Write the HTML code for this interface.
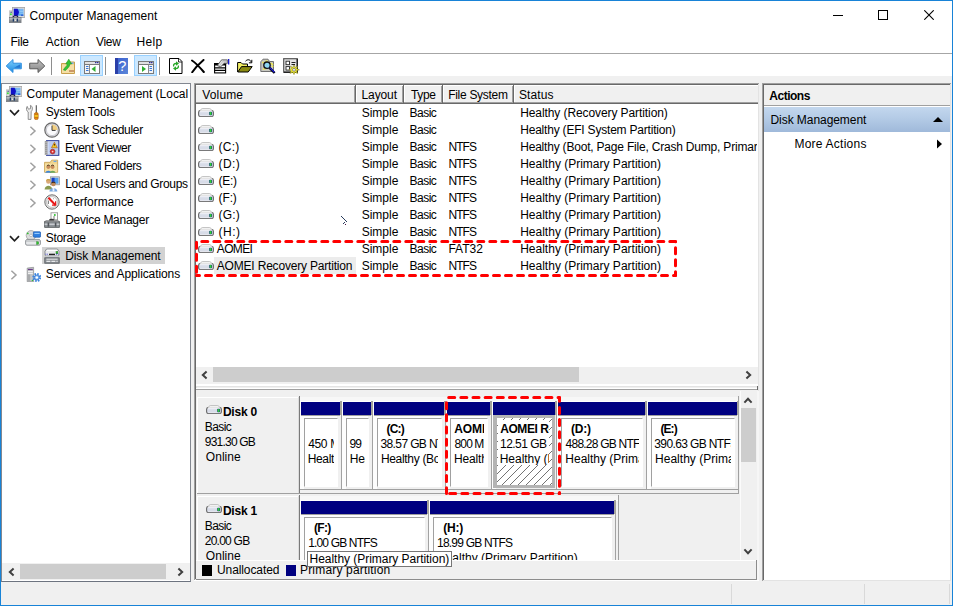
<!DOCTYPE html>
<html><head><meta charset="utf-8"><title>Computer Management</title>
<style>
*{box-sizing:border-box;margin:0;padding:0}
html,body{width:953px;height:606px;overflow:hidden;background:#f0f0f0}
body{font-family:"Liberation Sans",sans-serif;font-size:12px;color:#000;position:relative}
.a{position:absolute}
.t{position:absolute;white-space:nowrap;line-height:14px;height:14px}
.c{position:absolute;overflow:hidden}
</style></head><body>
<div class="a" style="left:0px;top:0px;width:953px;height:606px;background:#f0f0f0;"></div>
<div class="a" style="left:1px;top:1px;width:951px;height:30px;background:#fff;"></div>
<div class="a" style="left:1px;top:31px;width:951px;height:22px;background:#fff;"></div>
<div class="a" style="left:1px;top:53px;width:951px;height:1px;background:#a6a6a6;"></div>
<div class="a" style="left:1px;top:54px;width:951px;height:22px;background:#fff;"></div>
<span class="t" style="left:29.4px;top:9px;letter-spacing:0.11px;">Computer Management</span>
<span class="t" style="left:10.5px;top:35px;letter-spacing:-0.27px;">File</span>
<span class="t" style="left:45.7px;top:35px;letter-spacing:0.12px;">Action</span>
<span class="t" style="left:96px;top:35px;letter-spacing:-0.33px;">View</span>
<span class="t" style="left:136.5px;top:35px;letter-spacing:0.37px;">Help</span>
<svg class="a" style="left:9px;top:7px" width="16" height="16" viewBox="0 0 16 16"><rect x="3.4" y="0.4" width="12.4" height="10" fill="#dcdcdc" stroke="#a2a2a2" stroke-width=".8"/><rect x="4.8" y="1.8" width="9.6" height="7" fill="#5aa6ee"/><path d="M4.8 1.8H8.6L10 5L9 8.8H4.8Z" fill="#1010c8"/><path d="M10.4 3H14.4M10.4 4.6H14.4M10.4 6.2H14.4" stroke="#a6d2f8" stroke-width=".8"/><rect x="12" y="7.6" width="2.4" height="1.2" fill="#2a58d0"/><rect x="0.2" y="3.8" width="3.2" height="6.6" fill="#dadada" stroke="#b0b0b0" stroke-width=".5"/><rect x="1.6" y="4.6" width="1" height="1.4" fill="#28387a"/><circle cx="1.9" cy="7.3" r="1" fill="#38e038"/><path d="M3.8 10.4C4.4 8.2 8.6 8.2 9.2 10.4" stroke="#10103a" stroke-width="1.1" fill="none"/><rect x="0.3" y="10.3" width="11.8" height="5.5" fill="#8a9096" stroke="#6a6e74" stroke-width=".5"/><rect x="0.6" y="11.2" width="11.2" height="1.3" fill="#c2c6ca"/><rect x="0.6" y="14.2" width="11.2" height="1.2" fill="#7a8086"/><rect x="3.7" y="11.6" width="1.3" height="3" fill="#1c3a6a"/><rect x="7.7" y="11.6" width="1.3" height="3" fill="#1c3a6a"/><rect x="5.6" y="12.6" width="1.6" height="1.4" fill="#e8e8e8"/></svg>
<div class="a" style="left:833px;top:15px;width:10px;height:1px;background:#000;"></div>
<div class="a" style="left:878px;top:10px;width:10px;height:10px;background:transparent;border:1px solid #000"></div>
<svg class="a" style="left:924px;top:10px" width="10" height="10" viewBox="0 0 10 10"><path d="M0.3 0.3L9.7 9.7M9.7 0.3L0.3 9.7" stroke="#000" stroke-width="1.1" fill="none"/></svg>
<div class="a" style="left:51px;top:57px;width:1px;height:18px;background:#8e8e8e;"></div>
<div class="a" style="left:105px;top:57px;width:1px;height:18px;background:#8e8e8e;"></div>
<div class="a" style="left:159px;top:57px;width:1px;height:18px;background:#8e8e8e;"></div>
<div class="a" style="left:80px;top:55px;width:23px;height:21px;background:#cce8ff;border:1px solid #99d1ff"></div>
<div class="a" style="left:134px;top:55px;width:23px;height:21px;background:#cce8ff;border:1px solid #99d1ff"></div>
<svg class="a" style="left:5px;top:58px" width="18" height="16" viewBox="0 0 18 16"><defs><linearGradient id="gb" x1="0" y1="0" x2="0" y2="1"><stop offset="0" stop-color="#7fd0ff"/><stop offset="1" stop-color="#1e8be0"/></linearGradient><linearGradient id="gg" x1="0" y1="0" x2="0" y2="1"><stop offset="0" stop-color="#c4c4c4"/><stop offset="1" stop-color="#808080"/></linearGradient></defs><path d="M1.2 8L8 1.5V5.2H16.3V10.8H8V14.5Z" fill="url(#gb)" stroke="#2f8fe0" stroke-width="1"/><path d="M9 9.8L15.3 6.2V9.8Z" fill="#1565c8" opacity=".75"/></svg>
<svg class="a" style="left:28px;top:58px" width="18" height="16" viewBox="0 0 18 16"><path d="M16.8 8L10 1.5V5.2H1.7V10.8H10V14.5Z" fill="url(#gg)" stroke="#5a5a5a" stroke-width="1"/></svg>
<svg class="a" style="left:61px;top:58px" width="15" height="17" viewBox="0 0 15 17"><path d="M0.5 5.5H5L6.5 4H13.5V15.5H0.5Z" fill="#f1d592" stroke="#c9a04e" stroke-width="1"/><rect x="1" y="7" width="12" height="8" fill="#f6dfa6"/><rect x="9.5" y="4.5" width="3" height="1.5" fill="#6aa7e8"/><path d="M8 13H13" stroke="#a0522d" stroke-width="1"/><path d="M2.5 12C3.5 9 6 8.5 6.5 6H4.8L7.8 1.2L10.6 6H8.8C8.6 9.5 6 10.5 4.6 12.4Z" fill="#35c435" stroke="#1f9a1f" stroke-width=".6"/></svg>
<svg class="a" style="left:84px;top:61px" width="16" height="13" viewBox="0 0 16 13"><rect x="0.5" y="0.5" width="15" height="12" fill="#f4f4f4" stroke="#7a7a7a"/><rect x="1" y="1" width="14" height="2" fill="#e0e0e0"/><rect x="11" y="1" width="1.5" height="1.2" fill="#30309a"/><rect x="13" y="1" width="1.5" height="1.2" fill="#30309a"/><path d="M0.5 3.5H15.5" stroke="#7a7a7a"/><path d="M5.5 3.5V12.5" stroke="#8a8a8a"/><rect x="6" y="4" width="9" height="8" fill="#fff"/><path d="M2 5.5H4.5M2 7.5H4.5M2 9.5H4.5" stroke="#3a78d8" stroke-width="1"/><path d="M11.5 5L7.5 8L11.5 11Z" fill="#2fae2f"/></svg>
<svg class="a" style="left:138px;top:61px" width="16" height="13" viewBox="0 0 16 13"><rect x="0.5" y="0.5" width="15" height="12" fill="#f4f4f4" stroke="#7a7a7a"/><rect x="1" y="1" width="14" height="2" fill="#e0e0e0"/><rect x="11" y="1" width="1.5" height="1.2" fill="#30309a"/><rect x="13" y="1" width="1.5" height="1.2" fill="#30309a"/><path d="M0.5 3.5H15.5" stroke="#7a7a7a"/><path d="M10.5 3.5V12.5" stroke="#8a8a8a"/><rect x="1" y="4" width="9" height="8" fill="#fff"/><path d="M11.5 5.5H14M11.5 7.5H14M11.5 9.5H14" stroke="#3a78d8" stroke-width="1"/><path d="M4 5L8 8L4 11Z" fill="#2fae2f"/></svg>
<svg class="a" style="left:115px;top:58px" width="13" height="16" viewBox="0 0 13 16"><defs><linearGradient id="gh" x1="0" y1="0" x2="1" y2="1"><stop offset="0" stop-color="#3b5fd0"/><stop offset="1" stop-color="#5b86d8"/></linearGradient></defs><rect x="0" y="0" width="13" height="16" fill="url(#gh)"/><rect x="0" y="0" width="3" height="16" fill="#2a3fa8"/><text x="7.4" y="13" font-family="Liberation Sans, sans-serif" font-size="14.5" fill="#fff" text-anchor="middle">?</text></svg>
<svg class="a" style="left:169px;top:58px" width="14" height="16" viewBox="0 0 14 16"><path d="M0.5 0.5H10L13 3.5V15.5H0.5Z" fill="#fff" stroke="#000"/><path d="M9.5 1V4H13" fill="none" stroke="#000" stroke-width=".8"/><path d="M4 8.5C3.5 6 5 4.8 7 4.8V3.2L10 5.5L7 7.8V6.2C5.6 6.2 5 7 5.3 8.5Z" fill="#28a828"/><path d="M10 7.5C10.5 10 9 11.2 7 11.2V12.8L4 10.5L7 8.2V9.8C8.4 9.8 9 9 8.7 7.5Z" fill="#28a828"/></svg>
<svg class="a" style="left:191px;top:59px" width="14" height="14" viewBox="0 0 14 14"><path d="M1 1.5C4 3.5 9 8.5 12.8 13M12.5 1C9 4 4 9 1.2 13.2" stroke="#000" stroke-width="2" fill="none" stroke-linecap="round"/></svg>
<svg class="a" style="left:214px;top:58px" width="16" height="16" viewBox="0 0 16 16"><rect x="0.6" y="5.6" width="11" height="9.3" fill="#fff" stroke="#000" stroke-width="1.1"/><rect x="0.1" y="5.1" width="12" height="2.4" fill="#000"/><path d="M0.6 9.9H11.6M0.6 12.4H11.6" stroke="#000" stroke-width="1.15"/><path d="M3.2 7.6L7.6 1.8H13.4V5.4H10L6.6 9Z" fill="#c4c4c4" stroke="#444" stroke-width=".7"/><path d="M5 7L8.4 2.6M6.4 7.8L9.8 3.6" stroke="#f4f4f4" stroke-width=".8"/><path d="M14.7 1V6.4" stroke="#0000c8" stroke-width="1.2"/></svg>
<svg class="a" style="left:237px;top:58px" width="16" height="15" viewBox="0 0 16 15"><path d="M0.6 14V4.5H4L5.5 6H10.5V8.5" fill="#f2ee62" stroke="#000" stroke-width="1"/><path d="M0.8 14L4.5 8.6H15.2L11.2 14Z" fill="#8a8a10" stroke="#000" stroke-width="1"/><path d="M8.5 3.2C10.5 1 13.2 1.3 14.3 4.2M14.8 1.8V4.8H11.9" fill="none" stroke="#000" stroke-width="1"/></svg>
<svg class="a" style="left:260px;top:58px" width="16" height="16" viewBox="0 0 16 16"><path d="M0.8 3.8L3 1.2H8L9.5 3.5H13.5V13.5H0.8Z" fill="#c8c8c0" stroke="#707070" stroke-width="1"/><path d="M2.2 4.5H6.5V3H8M3 11H6M10.5 5.5H12.5V9" stroke="#f2ee40" stroke-width="1.6" stroke-dasharray="1.5 .8" fill="none"/><circle cx="7" cy="7.2" r="3.2" fill="#8fd8f4" stroke="#111" stroke-width="1.3"/><path d="M9.6 9.8L14.6 15" stroke="#000" stroke-width="2.4"/><path d="M9.8 9.6L14.4 14.2" stroke="#1a1ad8" stroke-width="1.3"/></svg>
<svg class="a" style="left:283px;top:58px" width="17" height="17" viewBox="0 0 17 17"><rect x="0.7" y="0.7" width="13.6" height="13.6" fill="#e4e4e4" stroke="#555" stroke-width="1.2"/><path d="M1 14.3H14.3V1" stroke="#222" stroke-width="1.4" fill="none"/><rect x="3" y="3.2" width="3.5" height="3.5" fill="#fff" stroke="#222" stroke-width=".9"/><rect x="3" y="8.6" width="3.5" height="3.5" fill="#fff" stroke="#222" stroke-width=".9"/><path d="M8.5 4.5H12.5M8.5 6.5H12" stroke="#222" stroke-width="1"/><path d="M11 7L12 9.6L14.8 8.2L13.6 10.8L16.4 11.8L13.6 12.8L14.6 15.6L12 14.2L11 16.6L9.8 14.2L7 15.4L8.2 12.8L5.8 11.8L8.4 10.8L7.4 8.2L10 9.6Z" fill="#f4ee30" stroke="#77741a" stroke-width=".5"/><circle cx="11" cy="11.8" r="1.5" fill="#e8e8e8" stroke="#555" stroke-width=".6"/></svg>
<div class="a" style="left:1px;top:83px;width:190px;height:499px;background:#fff;border:1px solid #828790;border-bottom-color:#6d7480"></div>
<div class="c" style="left:2px;top:84px;width:188px;height:480px">
<svg class="a" style="left:4px;top:2px" width="16" height="16" viewBox="0 0 16 16"><rect x="3.4" y="0.4" width="12.4" height="10" fill="#dcdcdc" stroke="#a2a2a2" stroke-width=".8"/><rect x="4.8" y="1.8" width="9.6" height="7" fill="#5aa6ee"/><path d="M4.8 1.8H8.6L10 5L9 8.8H4.8Z" fill="#1010c8"/><path d="M10.4 3H14.4M10.4 4.6H14.4M10.4 6.2H14.4" stroke="#a6d2f8" stroke-width=".8"/><rect x="12" y="7.6" width="2.4" height="1.2" fill="#2a58d0"/><rect x="0.2" y="3.8" width="3.2" height="6.6" fill="#dadada" stroke="#b0b0b0" stroke-width=".5"/><rect x="1.6" y="4.6" width="1" height="1.4" fill="#28387a"/><circle cx="1.9" cy="7.3" r="1" fill="#38e038"/><path d="M3.8 10.4C4.4 8.2 8.6 8.2 9.2 10.4" stroke="#10103a" stroke-width="1.1" fill="none"/><rect x="0.3" y="10.3" width="11.8" height="5.5" fill="#8a9096" stroke="#6a6e74" stroke-width=".5"/><rect x="0.6" y="11.2" width="11.2" height="1.3" fill="#c2c6ca"/><rect x="0.6" y="14.2" width="11.2" height="1.2" fill="#7a8086"/><rect x="3.7" y="11.6" width="1.3" height="3" fill="#1c3a6a"/><rect x="7.7" y="11.6" width="1.3" height="3" fill="#1c3a6a"/><rect x="5.6" y="12.6" width="1.6" height="1.4" fill="#e8e8e8"/></svg>
<span class="t" style="left:24.6px;top:2.5px;letter-spacing:-0.02px;">Computer Management (Local</span>
<svg class="a" style="left:23px;top:20px" width="16" height="16" viewBox="0 0 16 16"><path d="M3.2 15.4V8C1.4 7 0.8 4.4 2.2 2.4L3.4 5.2L5.6 4.6L5.4 1.4C7.6 2 8.2 5.4 6.2 7.6L6 15.4Z" fill="#ececec" stroke="#787878" stroke-width=".8"/><path d="M11.3 1.2V9" stroke="#505050" stroke-width="1.1"/><rect x="9.4" y="8.6" width="3.8" height="7" rx="1.5" fill="#e88a14" stroke="#a85e08" stroke-width=".6"/><rect x="9.7" y="11.3" width="3.2" height="1.3" fill="#f8e020"/><path d="M9.6 10.2H13M9.6 13.6H13" stroke="#b06408" stroke-width=".6"/></svg>
<svg class="a" style="left:7px;top:25px" width="11" height="8" viewBox="0 0 11 8"><path d="M1 1.2L5.5 5.8L10 1.2" stroke="#202020" stroke-width="1.7" fill="none"/></svg>
<span class="t" style="left:43.8px;top:20.5px;letter-spacing:-0.18px;">System Tools</span>
<svg class="a" style="left:42px;top:38px" width="16" height="16" viewBox="0 0 16 16"><circle cx="8" cy="8" r="7.2" fill="#e0e0e4" stroke="#686868" stroke-width="1.2"/><circle cx="8" cy="8" r="5.6" fill="#fafafc" stroke="#b4b4bc" stroke-width=".6"/><path d="M8 8V2.5A5.5 5.5 0 0 1 13.5 8Z" fill="#f2cf80"/><path d="M8 3.6V8.4H11.6" stroke="#3c3c3c" stroke-width="1" fill="none"/></svg>
<svg class="a" style="left:27px;top:42px" width="8" height="10" viewBox="0 0 8 10"><path d="M1.4 0.8L6 5L1.4 9.2" stroke="#a0a0a0" stroke-width="1.5" fill="none"/></svg>
<span class="t" style="left:63.2px;top:38.5px;letter-spacing:-0.31px;">Task Scheduler</span>
<svg class="a" style="left:42px;top:56px" width="16" height="16" viewBox="0 0 16 16"><rect x="2.6" y="0.7" width="12.2" height="14.6" fill="#e4ecfa" stroke="#2c3c9a" stroke-width="1.1"/><path d="M4.4 3H14M4.4 5H14M4.4 7H14M4.4 9H14M4.4 11H14M4.4 13H14" stroke="#8aa4e4" stroke-width=".9"/><rect x="0.8" y="1" width="2.6" height="14" fill="#8a8a8a"/><path d="M0.6 2.2H3.6M0.6 4.2H3.6M0.6 6.2H3.6M0.6 8.2H3.6M0.6 10.2H3.6M0.6 12.2H3.6M0.6 14.2H3.6" stroke="#d8d8d8" stroke-width=".7"/><path d="M10.4 2.2L13.4 7.8H7.4Z" fill="#f0a020" stroke="#a06000" stroke-width=".5"/><rect x="9.9" y="4.2" width="1" height="2.2" fill="#201000"/><rect x="9" y="5.4" width="2.8" height="1.6" fill="#f8e020" opacity=".8"/><circle cx="8.6" cy="11.6" r="2.4" fill="#d83030" stroke="#8c1414" stroke-width=".5"/><circle cx="8.6" cy="11.6" r=".9" fill="#fad0d0"/></svg>
<svg class="a" style="left:27px;top:60px" width="8" height="10" viewBox="0 0 8 10"><path d="M1.4 0.8L6 5L1.4 9.2" stroke="#a0a0a0" stroke-width="1.5" fill="none"/></svg>
<span class="t" style="left:63px;top:56.5px;letter-spacing:-0.38px;">Event Viewer</span>
<svg class="a" style="left:42px;top:74px" width="16" height="16" viewBox="0 0 16 16"><g transform="translate(-0.4,1) scale(0.95)"><path d="M1 3.5H7L8.5 1.2H14.8V14H1Z" fill="#f0d48c" stroke="#c49a48" stroke-width=".8"/><rect x="1.6" y="5" width="12.6" height="8.6" fill="#f6dfa2"/><rect x="10.5" y="1.8" width="3" height="1.4" fill="#6aa7e8"/><circle cx="5" cy="8.6" r="1.9" fill="#c98c5a"/><circle cx="9.4" cy="8.6" r="1.9" fill="#c98c5a"/><path d="M1.8 14.6C2 11.6 8 11.6 8.2 14.6Z" fill="#3f86d8"/><path d="M6.4 14.6C6.6 11.6 12.4 11.6 12.6 14.6Z" fill="#6aa85a"/><path d="M3.4 7.6C4 6 6 6 6.6 7.6M7.8 7.6C8.4 6 10.4 6 11 7.6" stroke="#402810" stroke-width="1" fill="none"/></g></svg>
<svg class="a" style="left:27px;top:78px" width="8" height="10" viewBox="0 0 8 10"><path d="M1.4 0.8L6 5L1.4 9.2" stroke="#a0a0a0" stroke-width="1.5" fill="none"/></svg>
<span class="t" style="left:62.7px;top:74.5px;letter-spacing:-0.38px;">Shared Folders</span>
<svg class="a" style="left:42px;top:92px" width="16" height="16" viewBox="0 0 16 16"><rect x="6.5" y="0.8" width="9" height="8" fill="#d8d8d8" stroke="#909090" stroke-width=".7"/><rect x="7.6" y="1.8" width="6.8" height="5.8" fill="#4f9df0"/><rect x="7.6" y="1.8" width="3" height="5.8" fill="#1b3fc0"/><circle cx="4.4" cy="5.4" r="2.3" fill="#d9a878"/><path d="M2 5C2.4 2.4 6.4 2.4 6.8 5C5.5 4 3.4 4 2 5Z" fill="#c8a040"/><path d="M0.6 13.5C0.8 8.6 8 8.6 8.2 13.5Z" fill="#8a9a50"/><circle cx="9.4" cy="8" r="2.3" fill="#c08858"/><path d="M7 7.6C7.4 5 11.4 5 11.8 7.6C10.5 6.6 8.4 6.6 7 7.6Z" fill="#3a2a1a"/><path d="M5.4 15.6C5.6 10.8 13.2 10.8 13.4 15.6Z" fill="#78a8e0"/><path d="M8.6 12H10.4V15.4H8.6Z" fill="#e8f0ff"/></svg>
<svg class="a" style="left:27px;top:96px" width="8" height="10" viewBox="0 0 8 10"><path d="M1.4 0.8L6 5L1.4 9.2" stroke="#a0a0a0" stroke-width="1.5" fill="none"/></svg>
<span class="t" style="left:63.2px;top:92.5px;letter-spacing:-0.31px;">Local Users and Groups</span>
<svg class="a" style="left:42px;top:110px" width="16" height="16" viewBox="0 0 16 16"><circle cx="8" cy="8" r="7.2" fill="#e4e4e4" stroke="#707070" stroke-width="1"/><circle cx="8" cy="8" r="5.4" fill="#fff" stroke="#a8a8a8" stroke-width=".6"/><path d="M4.4 10V6.5M6 5H6.8M9.4 4.6L10 5.2M11.6 7V7.8" stroke="#555" stroke-width=".8"/><path d="M4.4 3.8L11.4 11" stroke="#e81818" stroke-width="2"/><path d="M11.6 7.5V11.2H8" stroke="#e81818" stroke-width="1.2" fill="none"/></svg>
<svg class="a" style="left:27px;top:114px" width="8" height="10" viewBox="0 0 8 10"><path d="M1.4 0.8L6 5L1.4 9.2" stroke="#a0a0a0" stroke-width="1.5" fill="none"/></svg>
<span class="t" style="left:63.2px;top:110.5px;letter-spacing:-0.03px;">Performance</span>
<svg class="a" style="left:42px;top:128px" width="16" height="16" viewBox="0 0 16 16"><rect x="7" y="0.8" width="6.6" height="7" fill="#fff" stroke="#8a8a8a" stroke-width=".8"/><circle cx="10.8" cy="3" r="1" fill="#30c030"/><path d="M10 4V8" stroke="#555" stroke-width=".8"/><ellipse cx="7.6" cy="8.2" rx="2.6" ry="1.4" fill="#333"/><path d="M0.6 9.5H15.4V15.4H0.6Z" fill="#8e9398" stroke="#4c5054" stroke-width=".8"/><path d="M2 8.6H14L15.4 9.8H0.6Z" fill="#c0c4c8" stroke="#555" stroke-width=".5"/><path d="M0.6 12.2H15.4" stroke="#dfe3e6" stroke-width="1"/><rect x="3.6" y="10.6" width="1.6" height="4" fill="#50555a"/><rect x="10.8" y="10.6" width="1.6" height="4" fill="#50555a"/></svg>
<span class="t" style="left:63.2px;top:128.5px;letter-spacing:-0.26px;">Device Manager</span>
<svg class="a" style="left:23px;top:146px" width="16" height="16" viewBox="0 0 16 16"><circle cx="6" cy="5.4" r="4.8" fill="#dcdcdc" stroke="#a0a0a0" stroke-width=".8"/><circle cx="6" cy="5.4" r="1.3" fill="#fff" stroke="#909090" stroke-width=".5"/><circle cx="2.8" cy="3.4" r=".9" fill="#30c030"/><rect x="8.4" y="1.8" width="7.2" height="5.4" rx=".8" fill="#2f7fe0" stroke="#1858b0" stroke-width=".7"/><path d="M9.4 3.4H14.6" stroke="#9fd0ff" stroke-width="1"/><path d="M1.6 9.4H14.4L15.4 10.8V14C15.4 14.8 14.8 15.2 14 15.2H2C1.2 15.2 0.6 14.8 0.6 14V10.8Z" fill="#e6e8ea" stroke="#7c8084" stroke-width=".8"/><path d="M0.8 11H15.2" stroke="#9a9ea2" stroke-width=".7"/><rect x="11.6" y="11.8" width="2" height="2.4" fill="#30c030" stroke="#187818" stroke-width=".4"/></svg>
<svg class="a" style="left:7px;top:151px" width="11" height="8" viewBox="0 0 11 8"><path d="M1 1.2L5.5 5.8L10 1.2" stroke="#202020" stroke-width="1.7" fill="none"/></svg>
<span class="t" style="left:43.8px;top:146.5px;letter-spacing:-0.32px;">Storage</span>
<div class="a" style="left:40px;top:163px;width:123px;height:17px;background:#d2d2d2"></div>
<svg class="a" style="left:42px;top:164px" width="16" height="16" viewBox="0 0 16 16"><path d="M2.6 1H13.4L15 3.2V6.8C15 7.6 14.4 8 13.6 8H2.4C1.6 8 1 7.6 1 6.8V3.2Z" fill="#e8eaec" stroke="#7c8084" stroke-width=".8"/><path d="M3 2.4H13" stroke="#fff" stroke-width="1.2"/><rect x="12" y="3.6" width="1.8" height="2.2" fill="#30c030" stroke="#187818" stroke-width=".4"/><path d="M1.4 6.2H4M12 6.2H14.6" stroke="#2828c8" stroke-width=".8" stroke-dasharray="1 .8"/><path d="M5 6.4H11" stroke="#222" stroke-width="1.4"/><rect x="2" y="8" width="12" height="1.8" fill="#c8ccd0"/><rect x="0.8" y="9.8" width="14.4" height="5.4" fill="#8c9196" stroke="#50555a" stroke-width=".8"/><path d="M2.4 11.2H13.6" stroke="#e8eaec" stroke-width="1"/><path d="M2.4 13.4H13.6" stroke="#e8eaec" stroke-width="1.4" stroke-dasharray="4 1"/></svg>
<span class="t" style="left:63.2px;top:164.5px;letter-spacing:-0.09px;">Disk Management</span>
<svg class="a" style="left:23px;top:182px" width="16" height="16" viewBox="0 0 16 16"><g transform="translate(1,0.5)"><path d="M1.2 1.6L7.6 0.8V15.2H1.2Z" fill="#c4c6c8" stroke="#8a8c8e" stroke-width=".7"/><rect x="2" y="2.4" width="4.8" height="1.2" fill="#6a3a8a"/><rect x="2" y="4.6" width="4.8" height="1" fill="#f4f4f4"/><rect x="2" y="6.4" width="4.8" height="1" fill="#f4f4f4"/><rect x="1.2" y="8" width="3" height="7.2" fill="#a8aaac"/><circle cx="6.4" cy="14" r=".7" fill="#30c030"/><circle cx="10.8" cy="11" r="3.4" fill="none" stroke="#3a86e0" stroke-width="2.2" stroke-dasharray="1.5 1.17"/><circle cx="10.8" cy="11" r="2.6" fill="#6aa8f0" stroke="#2a6ac8" stroke-width=".6"/><circle cx="10.8" cy="11" r="1.3" fill="#fff"/></g></svg>
<svg class="a" style="left:8px;top:186px" width="8" height="10" viewBox="0 0 8 10"><path d="M1.4 0.8L6 5L1.4 9.2" stroke="#a0a0a0" stroke-width="1.5" fill="none"/></svg>
<span class="t" style="left:43.8px;top:182.5px;letter-spacing:-0.10px;">Services and Applications</span>
</div>
<div class="a" style="left:2px;top:563px;width:188px;height:17px;background:#f0f0f0;"></div>
<div class="a" style="left:20px;top:564px;width:146px;height:15px;background:#cdcdcd;"></div>
<svg class="a" style="left:8px;top:567px" width="7" height="10" viewBox="0 0 7 10"><path d="M5.6 1.4L1.8 5L5.6 8.6" stroke="#404040" stroke-width="2" fill="none"/></svg>
<svg class="a" style="left:177px;top:567px" width="7" height="10" viewBox="0 0 7 10"><path d="M1.4 1.4L5.2 5L1.4 8.6" stroke="#404040" stroke-width="2" fill="none"/></svg>
<div class="a" style="left:194px;top:83px;width:565px;height:498px;background:#fff;"></div>
<div class="a" style="left:194px;top:83px;width:565px;height:1px;background:#a0a0a0;"></div>
<div class="a" style="left:194px;top:83px;width:1px;height:497px;background:#a0a0a0;"></div>
<div class="a" style="left:195px;top:84px;width:563px;height:1px;background:#696969;"></div>
<div class="a" style="left:195px;top:84px;width:1px;height:495px;background:#696969;"></div>
<div class="a" style="left:758px;top:84px;width:1px;height:496px;background:#e3e3e3;"></div>
<div class="a" style="left:195px;top:579px;width:564px;height:1px;background:#e3e3e3;"></div>
<div class="a" style="left:194px;top:580px;width:565px;height:1px;background:#fff;"></div>
<div class="a" style="left:196px;top:85px;width:562px;height:17px;background:#f0f0f0;"></div>
<div class="a" style="left:196px;top:85px;width:562px;height:1px;background:#fff;"></div>
<div class="a" style="left:196px;top:103px;width:562px;height:1px;background:#696969;"></div>
<div class="a" style="left:196px;top:102px;width:562px;height:1px;background:#a0a0a0;"></div>
<div class="a" style="left:355px;top:85px;width:1px;height:18px;background:#696969;"></div>
<div class="a" style="left:354px;top:86px;width:1px;height:16px;background:#a0a0a0;"></div>
<div class="a" style="left:356px;top:85px;width:1px;height:17px;background:#fff;"></div>
<div class="a" style="left:403px;top:85px;width:1px;height:18px;background:#696969;"></div>
<div class="a" style="left:402px;top:86px;width:1px;height:16px;background:#a0a0a0;"></div>
<div class="a" style="left:404px;top:85px;width:1px;height:17px;background:#fff;"></div>
<div class="a" style="left:442px;top:85px;width:1px;height:18px;background:#696969;"></div>
<div class="a" style="left:441px;top:86px;width:1px;height:16px;background:#a0a0a0;"></div>
<div class="a" style="left:443px;top:85px;width:1px;height:17px;background:#fff;"></div>
<div class="a" style="left:513px;top:85px;width:1px;height:18px;background:#696969;"></div>
<div class="a" style="left:512px;top:86px;width:1px;height:16px;background:#a0a0a0;"></div>
<div class="a" style="left:514px;top:85px;width:1px;height:17px;background:#fff;"></div>
<span class="t" style="left:202.3px;top:87.5px;letter-spacing:0.14px;">Volume</span>
<span class="t" style="left:361.5px;top:87.5px;letter-spacing:-0.10px;">Layout</span>
<span class="t" style="left:411px;top:87.5px;letter-spacing:-0.33px;">Type</span>
<span class="t" style="left:448.2px;top:87.5px;letter-spacing:-0.29px;">File System</span>
<span class="t" style="left:519px;top:87.5px;letter-spacing:0.10px;">Status</span>
<div class="c" style="left:196px;top:103px;width:561px;height:264px">
<svg class="a" style="left:2px;top:5px" width="16" height="9" viewBox="0 0 16 9"><path d="M4.2 0.4H11.8L14.6 3H1.4Z" fill="#f2f2f2" stroke="#a8a8a8" stroke-width=".7"/><rect x="0.6" y="2.5" width="14.8" height="6" rx="1.8" fill="#d8dce8" stroke="#686868" stroke-width="1.1"/><path d="M2.2 2.6H13.8" stroke="#e4e4e4" stroke-width="1.3"/><path d="M2 3.7H14" stroke="#f4f4f8" stroke-width=".9"/><path d="M2 7.7H14" stroke="#eeeef2" stroke-width=".7"/><rect x="11.2" y="3.7" width="2.9" height="3.6" rx=".8" fill="#1f4a78"/><rect x="11.8" y="4.1" width="1.6" height="2.8" fill="#2fd82f"/></svg>
<span class="t" style="left:165.7px;top:2.7px;">Simple</span>
<span class="t" style="left:213.6px;top:2.7px;letter-spacing:-0.53px;">Basic</span>
<span class="t" style="left:324.2px;top:2.7px;letter-spacing:-0.09px;">Healthy (Recovery Partition)</span>
<svg class="a" style="left:2px;top:22px" width="16" height="9" viewBox="0 0 16 9"><path d="M4.2 0.4H11.8L14.6 3H1.4Z" fill="#f2f2f2" stroke="#a8a8a8" stroke-width=".7"/><rect x="0.6" y="2.5" width="14.8" height="6" rx="1.8" fill="#d8dce8" stroke="#686868" stroke-width="1.1"/><path d="M2.2 2.6H13.8" stroke="#e4e4e4" stroke-width="1.3"/><path d="M2 3.7H14" stroke="#f4f4f8" stroke-width=".9"/><path d="M2 7.7H14" stroke="#eeeef2" stroke-width=".7"/><rect x="11.2" y="3.7" width="2.9" height="3.6" rx=".8" fill="#1f4a78"/><rect x="11.8" y="4.1" width="1.6" height="2.8" fill="#2fd82f"/></svg>
<span class="t" style="left:165.7px;top:19.7px;">Simple</span>
<span class="t" style="left:213.6px;top:19.7px;letter-spacing:-0.53px;">Basic</span>
<span class="t" style="left:324.2px;top:19.7px;letter-spacing:-0.20px;">Healthy (EFI System Partition)</span>
<svg class="a" style="left:2px;top:39px" width="16" height="9" viewBox="0 0 16 9"><path d="M4.2 0.4H11.8L14.6 3H1.4Z" fill="#f2f2f2" stroke="#a8a8a8" stroke-width=".7"/><rect x="0.6" y="2.5" width="14.8" height="6" rx="1.8" fill="#d8dce8" stroke="#686868" stroke-width="1.1"/><path d="M2.2 2.6H13.8" stroke="#e4e4e4" stroke-width="1.3"/><path d="M2 3.7H14" stroke="#f4f4f8" stroke-width=".9"/><path d="M2 7.7H14" stroke="#eeeef2" stroke-width=".7"/><rect x="11.2" y="3.7" width="2.9" height="3.6" rx=".8" fill="#1f4a78"/><rect x="11.8" y="4.1" width="1.6" height="2.8" fill="#2fd82f"/></svg>
<span class="t" style="left:22.6px;top:36.7px;letter-spacing:0.20px;">(C:)</span>
<span class="t" style="left:165.7px;top:36.7px;">Simple</span>
<span class="t" style="left:213.6px;top:36.7px;letter-spacing:-0.53px;">Basic</span>
<span class="t" style="left:252.4px;top:36.7px;letter-spacing:-0.90px;">NTFS</span>
<span class="t" style="left:324.2px;top:36.7px;letter-spacing:-0.20px;">Healthy (Boot, Page File, Crash Dump, Primary Partition)</span>
<svg class="a" style="left:2px;top:56px" width="16" height="9" viewBox="0 0 16 9"><path d="M4.2 0.4H11.8L14.6 3H1.4Z" fill="#f2f2f2" stroke="#a8a8a8" stroke-width=".7"/><rect x="0.6" y="2.5" width="14.8" height="6" rx="1.8" fill="#d8dce8" stroke="#686868" stroke-width="1.1"/><path d="M2.2 2.6H13.8" stroke="#e4e4e4" stroke-width="1.3"/><path d="M2 3.7H14" stroke="#f4f4f8" stroke-width=".9"/><path d="M2 7.7H14" stroke="#eeeef2" stroke-width=".7"/><rect x="11.2" y="3.7" width="2.9" height="3.6" rx=".8" fill="#1f4a78"/><rect x="11.8" y="4.1" width="1.6" height="2.8" fill="#2fd82f"/></svg>
<span class="t" style="left:22.6px;top:53.7px;letter-spacing:0.40px;">(D:)</span>
<span class="t" style="left:165.7px;top:53.7px;">Simple</span>
<span class="t" style="left:213.6px;top:53.7px;letter-spacing:-0.53px;">Basic</span>
<span class="t" style="left:252.4px;top:53.7px;letter-spacing:-0.90px;">NTFS</span>
<span class="t" style="left:324.2px;top:53.7px;">Healthy (Primary Partition)</span>
<svg class="a" style="left:2px;top:73px" width="16" height="9" viewBox="0 0 16 9"><path d="M4.2 0.4H11.8L14.6 3H1.4Z" fill="#f2f2f2" stroke="#a8a8a8" stroke-width=".7"/><rect x="0.6" y="2.5" width="14.8" height="6" rx="1.8" fill="#d8dce8" stroke="#686868" stroke-width="1.1"/><path d="M2.2 2.6H13.8" stroke="#e4e4e4" stroke-width="1.3"/><path d="M2 3.7H14" stroke="#f4f4f8" stroke-width=".9"/><path d="M2 7.7H14" stroke="#eeeef2" stroke-width=".7"/><rect x="11.2" y="3.7" width="2.9" height="3.6" rx=".8" fill="#1f4a78"/><rect x="11.8" y="4.1" width="1.6" height="2.8" fill="#2fd82f"/></svg>
<span class="t" style="left:22.6px;top:70.7px;letter-spacing:-0.33px;">(E:)</span>
<span class="t" style="left:165.7px;top:70.7px;">Simple</span>
<span class="t" style="left:213.6px;top:70.7px;letter-spacing:-0.53px;">Basic</span>
<span class="t" style="left:252.4px;top:70.7px;letter-spacing:-0.90px;">NTFS</span>
<span class="t" style="left:324.2px;top:70.7px;">Healthy (Primary Partition)</span>
<svg class="a" style="left:2px;top:90px" width="16" height="9" viewBox="0 0 16 9"><path d="M4.2 0.4H11.8L14.6 3H1.4Z" fill="#f2f2f2" stroke="#a8a8a8" stroke-width=".7"/><rect x="0.6" y="2.5" width="14.8" height="6" rx="1.8" fill="#d8dce8" stroke="#686868" stroke-width="1.1"/><path d="M2.2 2.6H13.8" stroke="#e4e4e4" stroke-width="1.3"/><path d="M2 3.7H14" stroke="#f4f4f8" stroke-width=".9"/><path d="M2 7.7H14" stroke="#eeeef2" stroke-width=".7"/><rect x="11.2" y="3.7" width="2.9" height="3.6" rx=".8" fill="#1f4a78"/><rect x="11.8" y="4.1" width="1.6" height="2.8" fill="#2fd82f"/></svg>
<span class="t" style="left:22.6px;top:87.7px;letter-spacing:-0.13px;">(F:)</span>
<span class="t" style="left:165.7px;top:87.7px;">Simple</span>
<span class="t" style="left:213.6px;top:87.7px;letter-spacing:-0.53px;">Basic</span>
<span class="t" style="left:252.4px;top:87.7px;letter-spacing:-0.90px;">NTFS</span>
<span class="t" style="left:324.2px;top:87.7px;">Healthy (Primary Partition)</span>
<svg class="a" style="left:2px;top:107px" width="16" height="9" viewBox="0 0 16 9"><path d="M4.2 0.4H11.8L14.6 3H1.4Z" fill="#f2f2f2" stroke="#a8a8a8" stroke-width=".7"/><rect x="0.6" y="2.5" width="14.8" height="6" rx="1.8" fill="#d8dce8" stroke="#686868" stroke-width="1.1"/><path d="M2.2 2.6H13.8" stroke="#e4e4e4" stroke-width="1.3"/><path d="M2 3.7H14" stroke="#f4f4f8" stroke-width=".9"/><path d="M2 7.7H14" stroke="#eeeef2" stroke-width=".7"/><rect x="11.2" y="3.7" width="2.9" height="3.6" rx=".8" fill="#1f4a78"/><rect x="11.8" y="4.1" width="1.6" height="2.8" fill="#2fd82f"/></svg>
<span class="t" style="left:22.6px;top:104.7px;letter-spacing:0.13px;">(G:)</span>
<span class="t" style="left:165.7px;top:104.7px;">Simple</span>
<span class="t" style="left:213.6px;top:104.7px;letter-spacing:-0.53px;">Basic</span>
<span class="t" style="left:252.4px;top:104.7px;letter-spacing:-0.90px;">NTFS</span>
<span class="t" style="left:324.2px;top:104.7px;">Healthy (Primary Partition)</span>
<svg class="a" style="left:2px;top:124px" width="16" height="9" viewBox="0 0 16 9"><path d="M4.2 0.4H11.8L14.6 3H1.4Z" fill="#f2f2f2" stroke="#a8a8a8" stroke-width=".7"/><rect x="0.6" y="2.5" width="14.8" height="6" rx="1.8" fill="#d8dce8" stroke="#686868" stroke-width="1.1"/><path d="M2.2 2.6H13.8" stroke="#e4e4e4" stroke-width="1.3"/><path d="M2 3.7H14" stroke="#f4f4f8" stroke-width=".9"/><path d="M2 7.7H14" stroke="#eeeef2" stroke-width=".7"/><rect x="11.2" y="3.7" width="2.9" height="3.6" rx=".8" fill="#1f4a78"/><rect x="11.8" y="4.1" width="1.6" height="2.8" fill="#2fd82f"/></svg>
<span class="t" style="left:22.6px;top:121.7px;letter-spacing:0.47px;">(H:)</span>
<span class="t" style="left:165.7px;top:121.7px;">Simple</span>
<span class="t" style="left:213.6px;top:121.7px;letter-spacing:-0.53px;">Basic</span>
<span class="t" style="left:252.4px;top:121.7px;letter-spacing:-0.90px;">NTFS</span>
<span class="t" style="left:324.2px;top:121.7px;">Healthy (Primary Partition)</span>
<svg class="a" style="left:2px;top:141px" width="16" height="9" viewBox="0 0 16 9"><path d="M4.2 0.4H11.8L14.6 3H1.4Z" fill="#f2f2f2" stroke="#a8a8a8" stroke-width=".7"/><rect x="0.6" y="2.5" width="14.8" height="6" rx="1.8" fill="#d8dce8" stroke="#686868" stroke-width="1.1"/><path d="M2.2 2.6H13.8" stroke="#e4e4e4" stroke-width="1.3"/><path d="M2 3.7H14" stroke="#f4f4f8" stroke-width=".9"/><path d="M2 7.7H14" stroke="#eeeef2" stroke-width=".7"/><rect x="11.2" y="3.7" width="2.9" height="3.6" rx=".8" fill="#1f4a78"/><rect x="11.8" y="4.1" width="1.6" height="2.8" fill="#2fd82f"/></svg>
<span class="t" style="left:20.8px;top:138.7px;letter-spacing:-0.65px;">AOMEI</span>
<span class="t" style="left:165.7px;top:138.7px;">Simple</span>
<span class="t" style="left:213.6px;top:138.7px;letter-spacing:-0.53px;">Basic</span>
<span class="t" style="left:252.4px;top:138.7px;">FAT32</span>
<span class="t" style="left:324.2px;top:138.7px;">Healthy (Primary Partition)</span>
<div class="a" style="left:18px;top:154px;width:142px;height:17px;background:#ececec"></div>
<svg class="a" style="left:2px;top:158px" width="16" height="9" viewBox="0 0 16 9"><path d="M4.2 0.4H11.8L14.6 3H1.4Z" fill="#f2f2f2" stroke="#a8a8a8" stroke-width=".7"/><rect x="0.6" y="2.5" width="14.8" height="6" rx="1.8" fill="#d8dce8" stroke="#686868" stroke-width="1.1"/><path d="M2.2 2.6H13.8" stroke="#e4e4e4" stroke-width="1.3"/><path d="M2 3.7H14" stroke="#f4f4f8" stroke-width=".9"/><path d="M2 7.7H14" stroke="#eeeef2" stroke-width=".7"/><rect x="11.2" y="3.7" width="2.9" height="3.6" rx=".8" fill="#1f4a78"/><rect x="11.8" y="4.1" width="1.6" height="2.8" fill="#2fd82f"/></svg>
<span class="t" style="left:20.8px;top:155.7px;letter-spacing:-0.19px;">AOMEI Recovery Partition</span>
<span class="t" style="left:165.7px;top:155.7px;">Simple</span>
<span class="t" style="left:213.6px;top:155.7px;letter-spacing:-0.53px;">Basic</span>
<span class="t" style="left:252.4px;top:155.7px;letter-spacing:-0.90px;">NTFS</span>
<span class="t" style="left:324.2px;top:155.7px;">Healthy (Primary Partition)</span>
</div>
<svg class="a" style="left:340px;top:215px" width="9" height="11" viewBox="340 215 9 11" shape-rendering="crispEdges"><rect x="341" y="216" width="1" height="1" fill="#2a3c5c"/><rect x="342" y="217" width="1" height="1" fill="#2a3c5c"/><rect x="343" y="218" width="1" height="1" fill="#2a3c5c"/><rect x="344" y="219" width="1" height="1" fill="#2a3c5c"/><rect x="345" y="220" width="1" height="1" fill="#2a3c5c"/><rect x="346" y="221" width="1" height="1" fill="#2a3c5c"/><rect x="344" y="222" width="1" height="1" fill="#2a3c5c"/><rect x="343" y="223" width="1" height="1" fill="#2a3c5c"/><rect x="345" y="224" width="1" height="1" fill="#4a1040"/></svg>
<svg class="a" style="left:192px;top:237px" width="488" height="43" viewBox="192 237 488 43"><g stroke="#ff0000" stroke-width="3" stroke-linecap="round" fill="none" stroke-dasharray="6 6"><path d="M196.5 241.5H675.5" stroke-dashoffset="6.70"/><path d="M675.5 241.5V275.5" stroke-dashoffset="5.80"/><path d="M196.5 275.5H675.5" stroke-dashoffset="3.00"/><path d="M196.5 241.5V275.5" stroke-dashoffset="11.15"/></g></svg>
<div class="a" style="left:196px;top:367px;width:562px;height:17px;background:#f0f0f0;"></div>
<div class="a" style="left:213px;top:367px;width:366px;height:15px;background:#cdcdcd;"></div>
<svg class="a" style="left:201px;top:370px" width="7" height="10" viewBox="0 0 7 10"><path d="M5.6 1.4L1.8 5L5.6 8.6" stroke="#404040" stroke-width="2" fill="none"/></svg>
<svg class="a" style="left:745px;top:370px" width="7" height="10" viewBox="0 0 7 10"><path d="M1.4 1.4L5.2 5L1.4 8.6" stroke="#404040" stroke-width="2" fill="none"/></svg>
<div class="a" style="left:196px;top:384px;width:562px;height:2px;background:#fff;"></div>
<div class="a" style="left:196px;top:386px;width:562px;height:3px;background:#f0f0f0;"></div>
<div class="a" style="left:196px;top:386px;width:562px;height:1px;background:#e3e3e3;"></div>
<div class="a" style="left:196px;top:386px;width:1px;height:3px;background:#e3e3e3;"></div>
<div class="a" style="left:196px;top:388px;width:562px;height:1px;background:#fff;"></div>
<div class="a" style="left:196px;top:389px;width:562px;height:1px;background:#a0a0a0;"></div>
<div class="a" style="left:196px;top:390px;width:562px;height:1px;background:#696969;"></div>
<div class="a" style="left:757px;top:386px;width:1px;height:5px;background:#696969;"></div>
<div class="a" style="left:196px;top:390px;width:562px;height:170px;background:#f0f0f0;"></div>
<div class="c" style="left:196px;top:390px;width:544px;height:170px">
<div class="a" style="left:1px;top:7px;width:102px;height:97px;background:#f0f0f0;"></div>
<div class="a" style="left:1px;top:7px;width:102px;height:1px;background:#fff;"></div>
<div class="a" style="left:1px;top:7px;width:1px;height:97px;background:#fff;"></div>
<div class="a" style="left:103px;top:6px;width:1px;height:98px;background:#7a7a7a;"></div>
<div class="a" style="left:102px;top:7px;width:1px;height:97px;background:#dcdcdc;"></div>
<div class="a" style="left:1px;top:103px;width:103px;height:1px;background:#a0a0a0;"></div>
<svg class="a" style="left:9.5px;top:15px" width="16" height="9" viewBox="0 0 16 9"><path d="M4.2 0.4H11.8L14.6 3H1.4Z" fill="#f2f2f2" stroke="#a8a8a8" stroke-width=".7"/><rect x="0.6" y="2.5" width="14.8" height="6" rx="1.8" fill="#d8dce8" stroke="#686868" stroke-width="1.1"/><path d="M2.2 2.6H13.8" stroke="#e4e4e4" stroke-width="1.3"/><path d="M2 3.7H14" stroke="#f4f4f8" stroke-width=".9"/><path d="M2 7.7H14" stroke="#eeeef2" stroke-width=".7"/><rect x="11.2" y="3.7" width="2.9" height="3.6" rx=".8" fill="#1f4a78"/><rect x="11.8" y="4.1" width="1.6" height="2.8" fill="#2fd82f"/></svg>
<span class="t" style="left:26.9px;top:15px;letter-spacing:-0.22px;font-weight:bold;">Disk 0</span>
<span class="t" style="left:8.8px;top:30px;letter-spacing:-0.58px;">Basic</span>
<span class="t" style="left:8.8px;top:45px;letter-spacing:-0.79px;">931.30 GB</span>
<span class="t" style="left:9.8px;top:60px;letter-spacing:0.04px;">Online</span>
<div class="a" style="left:104px;top:7px;width:438px;height:4px;background:#f7f7f7;"></div>
<div class="a" style="left:104px;top:11px;width:438px;height:1px;background:#fff;"></div>
<div class="a" style="left:104px;top:99px;width:438px;height:1px;background:#a0a0a0;"></div>
<div class="a" style="left:104px;top:103px;width:439px;height:1px;background:#a0a0a0;"></div>
<div class="a" style="left:104px;top:12px;width:4px;height:87px;background:#fdfdfd;"></div>
<div class="a" style="left:105px;top:12px;width:39px;height:13px;background:#000080;"></div>
<div class="a" style="left:105px;top:25px;width:39px;height:1px;background:#a0a0a0;"></div>
<div class="a" style="left:105px;top:26px;width:36px;height:2px;background:#fdfdfd;"></div>
<div class="a" style="left:144px;top:11px;width:1.5px;height:14px;background:#a4a29c;"></div>
<div class="a" style="left:144.60000000000002px;top:25px;width:1px;height:74px;background:#a2a2a2;"></div>
<div class="a" style="left:108px;top:28px;width:34px;height:69px;background:#fff;border:1px solid #a0a0a0;border-right-color:#fff;border-bottom-color:#fff"></div>
<div class="c" style="left:109px;top:29px;width:29px;height:66px">
<span class="t" style="left:3.2px;top:18px;letter-spacing:-0.35px;">450 MB</span>
<span class="t" style="left:2.7px;top:33px;letter-spacing:-0.33px;">Healthy (Recovery Partition)</span>
</div>
<div class="a" style="left:145.5px;top:12px;width:4.5px;height:87px;background:#fdfdfd;"></div>
<div class="a" style="left:147px;top:12px;width:28px;height:13px;background:#000080;"></div>
<div class="a" style="left:147px;top:25px;width:28px;height:1px;background:#a0a0a0;"></div>
<div class="a" style="left:147px;top:26px;width:25px;height:2px;background:#fdfdfd;"></div>
<div class="a" style="left:175px;top:11px;width:1.5px;height:14px;background:#a4a29c;"></div>
<div class="a" style="left:175.60000000000002px;top:25px;width:1px;height:74px;background:#a2a2a2;"></div>
<div class="a" style="left:150px;top:28px;width:23px;height:69px;background:#fff;border:1px solid #a0a0a0;border-right-color:#fff;border-bottom-color:#fff"></div>
<div class="c" style="left:151px;top:29px;width:18px;height:66px">
<span class="t" style="left:2.4px;top:18px;letter-spacing:-0.90px;">99  MB</span>
<span class="t" style="left:2.8px;top:33px;letter-spacing:-0.30px;">Healthy (EFI System Partition)</span>
</div>
<div class="a" style="left:176.5px;top:12px;width:4.5px;height:87px;background:#fdfdfd;"></div>
<div class="a" style="left:178px;top:12px;width:70px;height:13px;background:#000080;"></div>
<div class="a" style="left:178px;top:25px;width:70px;height:1px;background:#a0a0a0;"></div>
<div class="a" style="left:178px;top:26px;width:67px;height:2px;background:#fdfdfd;"></div>
<div class="a" style="left:248px;top:11px;width:1.5px;height:14px;background:#a4a29c;"></div>
<div class="a" style="left:248.60000000000002px;top:25px;width:1px;height:74px;background:#a2a2a2;"></div>
<div class="a" style="left:181px;top:28px;width:65px;height:69px;background:#fff;border:1px solid #a0a0a0;border-right-color:#fff;border-bottom-color:#fff"></div>
<div class="c" style="left:182px;top:29px;width:60px;height:66px">
<span class="t" style="left:8.4px;top:3px;letter-spacing:-0.73px;font-weight:bold;">(C:)</span>
<span class="t" style="left:2.5px;top:18px;letter-spacing:-0.62px;">38.57 GB NTFS</span>
<span class="t" style="left:2.9px;top:33px;letter-spacing:-0.31px;">Healthy (Boot, Page File, Crash Dump, Primary Partition)</span>
</div>
<div class="a" style="left:249.5px;top:12px;width:4.5px;height:87px;background:#fdfdfd;"></div>
<div class="a" style="left:251px;top:12px;width:43px;height:13px;background:#000080;"></div>
<div class="a" style="left:251px;top:25px;width:43px;height:1px;background:#a0a0a0;"></div>
<div class="a" style="left:251px;top:26px;width:40px;height:2px;background:#fdfdfd;"></div>
<div class="a" style="left:294px;top:11px;width:1.5px;height:14px;background:#a4a29c;"></div>
<div class="a" style="left:294.6px;top:25px;width:1px;height:74px;background:#a2a2a2;"></div>
<div class="a" style="left:254px;top:28px;width:38px;height:69px;background:#fff;border:1px solid #a0a0a0;border-right-color:#fff;border-bottom-color:#fff"></div>
<div class="c" style="left:255px;top:29px;width:33px;height:66px">
<span class="t" style="left:3.2px;top:3px;letter-spacing:-0.10px;font-weight:bold;">AOMEI</span>
<span class="t" style="left:3.6px;top:18px;letter-spacing:-0.90px;">800 MB FAT32</span>
<span class="t" style="left:2.9px;top:33px;letter-spacing:-0.12px;">Healthy (Primary Partition)</span>
</div>
<div class="a" style="left:295.5px;top:12px;width:4.5px;height:87px;background:#fdfdfd;"></div>
<div class="a" style="left:297px;top:12px;width:62px;height:13px;background:#000080;"></div>
<div class="a" style="left:297px;top:25px;width:62px;height:1px;background:#a0a0a0;"></div>
<div class="a" style="left:297px;top:26px;width:59px;height:2px;background:#fdfdfd;"></div>
<div class="a" style="left:359px;top:11px;width:1.5px;height:14px;background:#a4a29c;"></div>
<div class="a" style="left:359.6px;top:25px;width:1px;height:74px;background:#a2a2a2;"></div>
<div class="a" style="left:297px;top:25px;width:62px;height:73px;background:#b4b4b4;"></div>
<svg class="a" style="left:301px;top:28px" width="55" height="67"><defs><pattern id="hz" width="8" height="8" patternUnits="userSpaceOnUse"><rect width="8" height="8" fill="#fff"/><path d="M-1 9L9 -1M-1 1L1 -1M7 9L9 7" stroke="#444" stroke-width=".75"/></pattern></defs><rect width="100%" height="100%" fill="url(#hz)"/></svg>
<div class="c" style="left:302px;top:30px;width:51px;height:45px;background:#fff">
<span class="t" style="left:2.2px;top:2px;letter-spacing:-0.43px;font-weight:bold;">AOMEI Recovery Partition</span>
<span class="t" style="left:2px;top:17px;letter-spacing:-0.53px;">12.51 GB NTFS</span>
<span class="t" style="left:1.7px;top:32px;letter-spacing:-0.02px;">Healthy (Primary Partition)</span>
</div>
<div class="a" style="left:360.5px;top:12px;width:4.5px;height:87px;background:#fdfdfd;"></div>
<div class="a" style="left:362px;top:12px;width:87px;height:13px;background:#000080;"></div>
<div class="a" style="left:362px;top:25px;width:87px;height:1px;background:#a0a0a0;"></div>
<div class="a" style="left:362px;top:26px;width:84px;height:2px;background:#fdfdfd;"></div>
<div class="a" style="left:449px;top:11px;width:1.5px;height:14px;background:#a4a29c;"></div>
<div class="a" style="left:449.6px;top:25px;width:1px;height:74px;background:#a2a2a2;"></div>
<div class="a" style="left:365px;top:28px;width:82px;height:69px;background:#fff;border:1px solid #a0a0a0;border-right-color:#fff;border-bottom-color:#fff"></div>
<div class="c" style="left:366px;top:29px;width:77px;height:66px">
<span class="t" style="left:8.9px;top:3px;letter-spacing:-0.17px;font-weight:bold;">(D:)</span>
<span class="t" style="left:3.6px;top:18px;letter-spacing:-0.78px;">488.28 GB NTFS</span>
<span class="t" style="left:3.3px;top:33px;">Healthy (Primary Partition)</span>
</div>
<div class="a" style="left:450.5px;top:12px;width:4.5px;height:87px;background:#fdfdfd;"></div>
<div class="a" style="left:452px;top:12px;width:89px;height:13px;background:#000080;"></div>
<div class="a" style="left:452px;top:25px;width:89px;height:1px;background:#a0a0a0;"></div>
<div class="a" style="left:452px;top:26px;width:86px;height:2px;background:#fdfdfd;"></div>
<div class="a" style="left:541px;top:11px;width:1.5px;height:14px;background:#a4a29c;"></div>
<div class="a" style="left:541.6px;top:25px;width:1px;height:74px;background:#a2a2a2;"></div>
<div class="a" style="left:455px;top:28px;width:84px;height:69px;background:#fff;border:1px solid #a0a0a0;border-right-color:#fff;border-bottom-color:#fff"></div>
<div class="c" style="left:456px;top:29px;width:79px;height:66px">
<span class="t" style="left:8.4px;top:3px;letter-spacing:-0.90px;font-weight:bold;">(E:)</span>
<span class="t" style="left:2.3px;top:18px;letter-spacing:-0.62px;">390.63 GB NTFS</span>
<span class="t" style="left:3px;top:33px;letter-spacing:0.03px;">Healthy (Primary Partition)</span>
</div>
<div class="a" style="left:542px;top:6px;width:1px;height:98px;background:#a0a0a0;"></div>
<div class="a" style="left:1px;top:106px;width:102px;height:97px;background:#f0f0f0;"></div>
<div class="a" style="left:1px;top:106px;width:102px;height:1px;background:#fff;"></div>
<div class="a" style="left:1px;top:106px;width:1px;height:97px;background:#fff;"></div>
<div class="a" style="left:103px;top:105px;width:1px;height:98px;background:#7a7a7a;"></div>
<div class="a" style="left:102px;top:106px;width:1px;height:97px;background:#dcdcdc;"></div>
<div class="a" style="left:1px;top:202px;width:103px;height:1px;background:#a0a0a0;"></div>
<svg class="a" style="left:9.5px;top:114px" width="16" height="9" viewBox="0 0 16 9"><path d="M4.2 0.4H11.8L14.6 3H1.4Z" fill="#f2f2f2" stroke="#a8a8a8" stroke-width=".7"/><rect x="0.6" y="2.5" width="14.8" height="6" rx="1.8" fill="#d8dce8" stroke="#686868" stroke-width="1.1"/><path d="M2.2 2.6H13.8" stroke="#e4e4e4" stroke-width="1.3"/><path d="M2 3.7H14" stroke="#f4f4f8" stroke-width=".9"/><path d="M2 7.7H14" stroke="#eeeef2" stroke-width=".7"/><rect x="11.2" y="3.7" width="2.9" height="3.6" rx=".8" fill="#1f4a78"/><rect x="11.8" y="4.1" width="1.6" height="2.8" fill="#2fd82f"/></svg>
<span class="t" style="left:26.9px;top:114px;letter-spacing:-0.22px;font-weight:bold;">Disk 1</span>
<span class="t" style="left:8.8px;top:129px;letter-spacing:-0.58px;">Basic</span>
<span class="t" style="left:8.8px;top:144px;letter-spacing:-0.76px;">20.00 GB</span>
<span class="t" style="left:9.8px;top:159px;letter-spacing:0.04px;">Online</span>
<div class="a" style="left:104px;top:106px;width:318px;height:4px;background:#f7f7f7;"></div>
<div class="a" style="left:104px;top:110px;width:318px;height:1px;background:#fff;"></div>
<div class="a" style="left:104px;top:198px;width:318px;height:1px;background:#a0a0a0;"></div>
<div class="a" style="left:104px;top:202px;width:319px;height:1px;background:#a0a0a0;"></div>
<div class="a" style="left:104px;top:111px;width:4px;height:87px;background:#fdfdfd;"></div>
<div class="a" style="left:105px;top:111px;width:126px;height:13px;background:#000080;"></div>
<div class="a" style="left:105px;top:124px;width:126px;height:1px;background:#a0a0a0;"></div>
<div class="a" style="left:105px;top:125px;width:123px;height:2px;background:#fdfdfd;"></div>
<div class="a" style="left:231px;top:110px;width:1.5px;height:14px;background:#a4a29c;"></div>
<div class="a" style="left:231.60000000000002px;top:124px;width:1px;height:74px;background:#a2a2a2;"></div>
<div class="a" style="left:108px;top:127px;width:121px;height:69px;background:#fff;border:1px solid #a0a0a0;border-right-color:#fff;border-bottom-color:#fff"></div>
<div class="c" style="left:109px;top:128px;width:116px;height:66px">
<span class="t" style="left:9px;top:3px;letter-spacing:-0.67px;font-weight:bold;">(F:)</span>
<span class="t" style="left:3.2px;top:18px;letter-spacing:-0.84px;">1.00 GB NTFS</span>
<span class="t" style="left:3.2px;top:33px;">Healthy (Primary Partition)</span>
</div>
<div class="a" style="left:232.5px;top:111px;width:4.5px;height:87px;background:#fdfdfd;"></div>
<div class="a" style="left:234px;top:111px;width:184px;height:13px;background:#000080;"></div>
<div class="a" style="left:234px;top:124px;width:184px;height:1px;background:#a0a0a0;"></div>
<div class="a" style="left:234px;top:125px;width:181px;height:2px;background:#fdfdfd;"></div>
<div class="a" style="left:418px;top:110px;width:1.5px;height:14px;background:#a4a29c;"></div>
<div class="a" style="left:418.6px;top:124px;width:1px;height:74px;background:#a2a2a2;"></div>
<div class="a" style="left:237px;top:127px;width:179px;height:69px;background:#fff;border:1px solid #a0a0a0;border-right-color:#fff;border-bottom-color:#fff"></div>
<div class="c" style="left:238px;top:128px;width:174px;height:66px">
<span class="t" style="left:9.2px;top:3px;letter-spacing:-0.23px;font-weight:bold;">(H:)</span>
<span class="t" style="left:3px;top:18px;letter-spacing:-0.77px;">18.99 GB NTFS</span>
<span class="t" style="left:3px;top:33px;">Healthy (Primary Partition)</span>
</div>
<div class="a" style="left:422px;top:105px;width:1px;height:98px;background:#a0a0a0;"></div>
</div>
<svg class="a" style="left:442px;top:393px" width="122" height="105" viewBox="442 393 122 105"><g stroke="#ff0000" stroke-width="3" stroke-linecap="round" fill="none" stroke-dasharray="6 6.15"><path d="M446.5 397.5H559.5" stroke-dashoffset="9.95"/><path d="M559.5 397.5V493.5" stroke-dashoffset="2.25"/><path d="M446.5 493.5H559.5" stroke-dashoffset="8.95"/><path d="M446.5 397.5V493.5" stroke-dashoffset="6.95"/></g></svg>
<div class="a" style="left:740px;top:391px;width:17px;height:169px;background:#f0f0f0;"></div>
<div class="a" style="left:740px;top:391px;width:1px;height:169px;background:#fbfbfb;"></div>
<div class="a" style="left:741px;top:408px;width:15px;height:54px;background:#cdcdcd;"></div>
<svg class="a" style="left:743px;top:397px" width="10" height="7" viewBox="0 0 10 7"><path d="M1.4 5.6L5 1.8L8.6 5.6" stroke="#404040" stroke-width="2" fill="none"/></svg>
<svg class="a" style="left:743px;top:548px" width="10" height="7" viewBox="0 0 10 7"><path d="M1.4 1.4L5 5.2L8.6 1.4" stroke="#404040" stroke-width="2" fill="none"/></svg>
<div class="a" style="left:196px;top:560px;width:562px;height:20px;background:#f0f0f0;"></div>
<div class="a" style="left:196px;top:560px;width:561px;height:1px;background:#fff;"></div>
<div class="a" style="left:756px;top:560px;width:1px;height:20px;background:#8c8c8c;"></div>
<div class="a" style="left:196px;top:579px;width:561px;height:1px;background:#8c8c8c;"></div>
<div class="a" style="left:757px;top:391px;width:2px;height:189px;background:#f6f6f6;"></div>
<div class="a" style="left:202px;top:565px;width:10px;height:11px;background:#000;"></div>
<span class="t" style="left:217px;top:563px;letter-spacing:-0.10px;">Unallocated</span>
<div class="a" style="left:286px;top:565px;width:10px;height:11px;background:#000080;"></div>
<span class="t" style="left:300px;top:563px;letter-spacing:0.18px;">Primary partition</span>
<div class="a" style="left:307px;top:551px;width:145px;height:16px;background:#fff;border:1px solid #767676"></div>
<span class="t" style="left:309.6px;top:552px;letter-spacing:-0.04px;">Healthy (Primary Partition)</span>
<div class="a" style="left:762px;top:83px;width:189px;height:498px;background:#fff;"></div>
<div class="a" style="left:762px;top:83px;width:189px;height:1px;background:#a0a0a0;"></div>
<div class="a" style="left:762px;top:83px;width:1px;height:498px;background:#a0a0a0;"></div>
<div class="a" style="left:763px;top:84px;width:188px;height:1px;background:#696969;"></div>
<div class="a" style="left:763px;top:84px;width:1px;height:497px;background:#696969;"></div>
<div class="a" style="left:950px;top:84px;width:1px;height:497px;background:#e3e3e3;"></div>
<div class="a" style="left:763px;top:580px;width:188px;height:1px;background:#e3e3e3;"></div>
<div class="a" style="left:764px;top:85px;width:186px;height:20px;background:#f0f0f0;"></div>
<div class="a" style="left:764px;top:105px;width:186px;height:1px;background:#a0a0a0;"></div>
<span class="t" style="left:769.3px;top:88.5px;letter-spacing:-0.50px;font-weight:bold;">Actions</span>
<div class="a" style="left:764px;top:107px;width:186px;height:25px;background:linear-gradient(#c3d7ee,#b4cbe6 45%,#9fb9da);"></div>
<span class="t" style="left:770.5px;top:113.2px;letter-spacing:-0.06px;">Disk Management</span>
<svg class="a" style="left:932px;top:116px" width="12" height="7" viewBox="0 0 12 7"><path d="M1 6L6 1L11 6Z" fill="#000"/></svg>
<span class="t" style="left:794.4px;top:137.3px;letter-spacing:0.24px;">More Actions</span>
<svg class="a" style="left:936px;top:139px" width="7" height="10" viewBox="0 0 7 10"><path d="M1 0.5L6 5L1 9.5Z" fill="#000"/></svg>
<div class="a" style="left:731px;top:584px;width:1px;height:20px;background:#d9d9d9;"></div>
<div class="a" style="left:864px;top:584px;width:1px;height:20px;background:#d9d9d9;"></div>
<div class="a" style="left:949px;top:584px;width:1px;height:20px;background:#d9d9d9;"></div>
<div class="a" style="left:0px;top:0px;width:953px;height:1px;background:#1883d7;"></div>
<div class="a" style="left:0px;top:605px;width:953px;height:1px;background:#1883d7;"></div>
<div class="a" style="left:0px;top:0px;width:1px;height:606px;background:#1883d7;"></div>
<div class="a" style="left:952px;top:0px;width:1px;height:606px;background:#1883d7;"></div>
</body></html>
